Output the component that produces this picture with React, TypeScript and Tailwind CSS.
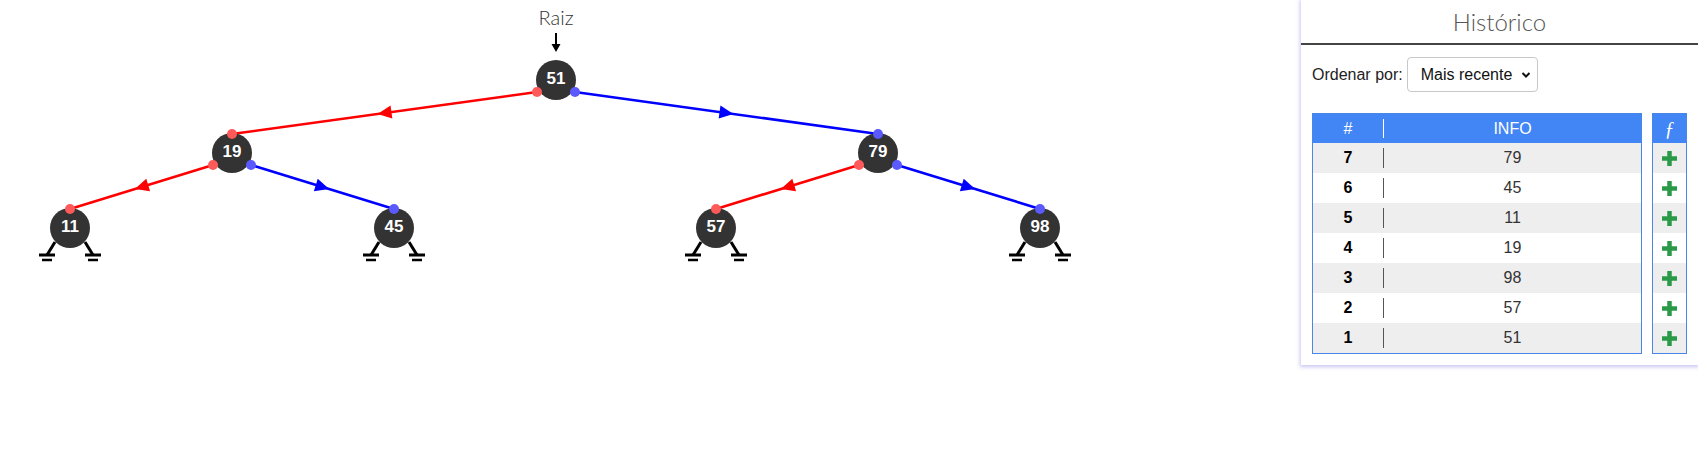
import React from 'react';

type TreeNode = { id: number; x: number; y: number };
type Edge = { from: TreeNode; to: TreeNode; side: 'left' | 'right' };

const L0 = 80;
const L1 = 153;
const L2 = 228;

const n51: TreeNode = { id: 51, x: 556, y: L0 };
const n19: TreeNode = { id: 19, x: 232, y: L1 };
const n79: TreeNode = { id: 79, x: 878, y: L1 };
const n11: TreeNode = { id: 11, x: 70, y: L2 };
const n45: TreeNode = { id: 45, x: 394, y: L2 };
const n57: TreeNode = { id: 57, x: 716, y: L2 };
const n98: TreeNode = { id: 98, x: 1040, y: L2 };

const nodes = [n51, n19, n79, n11, n45, n57, n98];
const leaves = [n11, n45, n57, n98];

const edges: Edge[] = [
  { from: n51, to: n19, side: 'left' },
  { from: n51, to: n79, side: 'right' },
  { from: n19, to: n11, side: 'left' },
  { from: n19, to: n45, side: 'right' },
  { from: n79, to: n57, side: 'left' },
  { from: n79, to: n98, side: 'right' },
];

const history = [
  [7, 79],
  [6, 45],
  [5, 11],
  [4, 19],
  [3, 98],
  [2, 57],
  [1, 51],
];

// seta no meio da aresta, apontando para o filho
const arrowPoints = (x1: number, y1: number, x2: number, y2: number) => {
  const mx = (x1 + x2) / 2;
  const my = (y1 + y2) / 2;
  const len = Math.hypot(x2 - x1, y2 - y1);
  const ux = (x2 - x1) / len;
  const uy = (y2 - y1) / len;
  const px = -uy;
  const py = ux;
  const tip = [mx + ux * 7, my + uy * 7];
  const b1 = [mx - ux * 7 + px * 6.5, my - uy * 7 + py * 6.5];
  const b2 = [mx - ux * 7 - px * 6.5, my - uy * 7 - py * 6.5];
  return `${tip[0]},${tip[1]} ${b1[0]},${b1[1]} ${b2[0]},${b2[1]}`;
};

const Ground = ({ x, y, dir }: { x: number; y: number; dir: 1 | -1 }) => (
  <g stroke="#000" strokeLinecap="butt">
    <line x1={x + dir * 15} y1={y + 14} x2={x + dir * 23} y2={y + 27} strokeWidth={3} />
    <line x1={x + dir * 15} y1={y + 27} x2={x + dir * 31} y2={y + 27} strokeWidth={3} />
    <line x1={x + dir * 18} y1={y + 32} x2={x + dir * 28} y2={y + 32} strokeWidth={2.5} />
  </g>
);

const TreeCanvas = () => (
  <svg width={1301} height={300} className="block">
    <text
      x={556}
      y={25}
      textAnchor="middle"
      fontSize={20}
      fontWeight={300}
      fill="#333"
      fontFamily="Lato, 'Open Sans', sans-serif"
    >
      Raiz
    </text>
    <line x1={556} y1={33} x2={556} y2={45} stroke="#000" strokeWidth={2} />
    <polygon points="551.5,44 560.5,44 556,52" fill="#000" />

    {edges.map((e, i) => {
      const dir = e.side === 'left' ? -1 : 1;
      const x1 = e.from.x + dir * 19;
      const y1 = e.from.y + 12;
      const x2 = e.to.x;
      const y2 = e.to.y - 19;
      const color = e.side === 'left' ? '#ff0000' : '#0000ff';
      return (
        <g key={i}>
          <line x1={x1} y1={y1} x2={x2} y2={y2} stroke={color} strokeWidth={2.6} />
          <polygon points={arrowPoints(x1, y1, x2, y2)} fill={color} />
        </g>
      );
    })}

    {leaves.map((n) => (
      <g key={`g${n.id}`}>
        <Ground x={n.x} y={n.y} dir={-1} />
        <Ground x={n.x} y={n.y} dir={1} />
      </g>
    ))}

    {nodes.map((n) => (
      <g key={n.id}>
        <circle cx={n.x} cy={n.y} r={20} fill="#333" />
        <text
          x={n.x}
          y={n.y + 4}
          textAnchor="middle"
          fontSize={17}
          fontWeight={700}
          fill="#fff"
          fontFamily="'Liberation Sans', Arial, sans-serif"
        >
          {n.id}
        </text>
      </g>
    ))}

    {edges.map((e, i) => {
      const dir = e.side === 'left' ? -1 : 1;
      const dot = e.side === 'left' ? '#ff5a5a' : '#5a5aff';
      return (
        <g key={`d${i}`}>
          <circle cx={e.from.x + dir * 19} cy={e.from.y + 12} r={5} fill={dot} />
          <circle cx={e.to.x} cy={e.to.y - 19} r={5} fill={dot} />
        </g>
      );
    })}
  </svg>
);

const Plus = () => (
  <svg width={17} height={17} viewBox="0 0 17 17">
    <path d="M8.5 1v15M1 8.5h15" stroke="#2a9a48" strokeWidth={4.5} />
  </svg>
);

const HistoryPanel = () => (
  <div className="w-[397px] self-start bg-white shadow-[0_1px_4px_1px_rgba(110,110,220,0.4)] flex flex-col font-['Liberation_Sans',Arial,sans-serif]">
    <div className="h-[45px] flex items-center justify-center border-b-2 border-[#444] font-['Lato',sans-serif] font-light text-[24px] text-[#555]">
      Histórico
    </div>

    <div className="flex items-center gap-[4px] px-[11px] mt-[12px]">
      <span className="text-[16px] text-[#222]">Ordenar por:</span>
      <div className="relative w-[131px] h-[35px] border border-[#c8c8c8] rounded-[4px] bg-white">
        <select className="appearance-none w-full h-full bg-transparent pl-[13px] text-[16px] text-[#111] outline-none">
          <option>Mais recente</option>
        </select>
        <svg
          className="absolute right-[6px] top-[13px] pointer-events-none"
          width={10}
          height={8}
          viewBox="0 0 10 8"
        >
          <path d="M1.5 2l3.5 3.5L8.5 2" stroke="#111" strokeWidth={2} fill="none" />
        </svg>
      </div>
    </div>

    <div className="flex gap-[10px] px-[11px] mt-[21px] pb-[11px]">
      <div className="flex-1 border border-[#4a86e8]">
        <div className="h-[29px] bg-[#4285f4] flex items-center text-white text-[16px]">
          <div className="w-[70px] text-center">#</div>
          <div className="w-px h-[19px] bg-white" />
          <div className="flex-1 text-center">INFO</div>
        </div>
        {history.map(([n, v], i) => (
          <div
            key={n}
            className={`h-[30px] flex items-center text-[16px] ${i % 2 === 0 ? 'bg-[#eeeeee]' : 'bg-white'}`}
          >
            <div className="w-[70px] text-center font-bold text-black">{n}</div>
            <div className="w-px h-[20px] bg-[#555]" />
            <div className="flex-1 text-center text-[#333]">{v}</div>
          </div>
        ))}
      </div>

      <div className="w-[35px] border border-[#4a86e8]">
        <div className="h-[29px] bg-[#4285f4] flex items-center justify-center text-white italic text-[20px] font-['Liberation_Serif',serif]">
          ƒ
        </div>
        {history.map(([n], i) => (
          <div
            key={n}
            className={`h-[30px] flex items-center justify-center ${i % 2 === 0 ? 'bg-[#eeeeee]' : 'bg-white'}`}
          >
            <Plus />
          </div>
        ))}
      </div>
    </div>
  </div>
);

export default function App() {
  return (
    <div className="flex w-[1698px] h-[475px] bg-white">
      <div className="flex-1">
        <TreeCanvas />
      </div>
      <HistoryPanel />
    </div>
  );
}
